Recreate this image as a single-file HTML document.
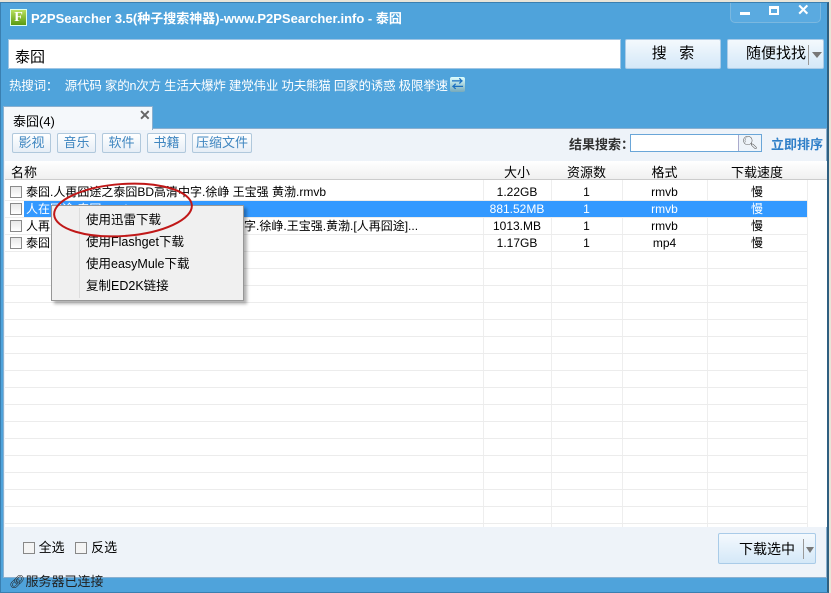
<!DOCTYPE html>
<html><head><meta charset="utf-8"><style>
*{margin:0;padding:0;box-sizing:border-box}
body{width:831px;height:593px;overflow:hidden;background:#e8e4d8;font-family:"Liberation Sans","Noto Sans CJK SC",sans-serif;font-size:12px;color:#000;position:relative}
.win{position:absolute;left:0;top:2px;width:829px;height:591px;background:#4fa3db;border:1px solid #3a7fb0;border-right:2px solid #2f5f80}
.a{position:absolute}
.title{left:30px;top:5px;color:#fff;font-weight:bold;font-size:13px}
.logo{left:9px;top:6px;width:17px;height:17px;background:linear-gradient(#b8e060,#5a9a10);border:1px solid #dfe;color:#fff;font:bold 14px "Liberation Serif",serif;text-align:center;line-height:15px}
.ctl{left:729px;top:0;width:91px;height:20px;border:1px solid #7bb8e0;border-top:none;border-radius:0 0 5px 5px;background:#5aaae0}
.inp{left:7px;top:36px;width:613px;height:30px;background:#fff;border:1px solid #9fc5e4;font-size:15px;padding:6px 6px}
.btn{background:linear-gradient(#f4f9fd,#d4e8f8);border:1px solid #a9cbe8;border-radius:2px;font-size:15px;text-align:center;line-height:28px}
.hot{left:8px;top:72px;color:#fff;font-size:12.5px;letter-spacing:-0.2px}
.panel{left:2px;top:125px;width:824px;height:450px;background:#eef3f9;border:1px solid #8ab0d0}
.tab{left:2px;top:103px;width:150px;height:24px;background:#f5f8fb;border:1px solid #8ab0d0;border-bottom:none;font-size:13px;padding:4px 9px}
.tb{top:4px;height:20px;border:1px solid #b0c8dc;border-radius:2px;background:linear-gradient(#fff,#e6eef6);color:#3f86c0;font-size:13px;line-height:18px;text-align:center}
.list{left:4px;top:158px;width:822px;height:366px;background:#fff}
.hdr{left:0;top:0;width:822px;height:19px;background:linear-gradient(#fff,#f0f0f0);border-bottom:1px solid #ccc;font-size:13px}
.row{position:absolute;left:0;width:802px;height:17px;border-bottom:1px solid #ececec;font-size:12px;line-height:16px}
.c{position:absolute;top:0;text-align:center}
.cb{position:absolute;left:5px;top:2px;width:12px;height:12px;border:1px solid #8a8a8a;background:linear-gradient(#e8e8e8,#fff)}
.sel{background:#3399ff;color:#fff}
.vl{position:absolute;top:0;width:1px;height:366px;background:#eee}
.menu{left:50px;top:202px;width:193px;height:96px;background:#f0f0f0;border:1px solid #979797;box-shadow:3px 3px 3px rgba(0,0,0,.3);font-size:12.5px}
.menu div{position:absolute;left:34px}
</style></head><body>
<div class="win">
<div class="a logo">F</div>
<div class="a title">P2PSearcher 3.5(种子搜索神器)-www.P2PSearcher.info - 泰囧</div>
<div class="a ctl"><span class="a" style="left:9px;top:9px;width:10px;height:3px;background:#fff"></span><span class="a" style="left:38px;top:3px;width:10px;height:9px;border:2px solid #fff;border-top-width:3px"></span><span class="a" style="left:66px;top:-2px;color:#fff;font-weight:bold;font-size:15px">✕</span></div>
<div class="a inp">泰囧</div>
<div class="a btn" style="left:624px;top:36px;width:96px;height:30px">搜&nbsp;&nbsp;&nbsp;索</div>
<div class="a btn" style="left:726px;top:36px;width:97px;height:30px;text-align:left;padding-left:18px">随便找找<span class="a" style="left:80px;top:5px;width:1px;height:20px;background:#999"></span><span class="a" style="left:84px;top:12px;border:5px solid transparent;border-top:6px solid #777"></span></div>
<div class="a hot">热搜词：&nbsp;&nbsp;源代码 家的n次方 生活大爆炸 建党伟业 功夫熊猫 回家的诱惑 极限挙速</div>
<div class="a" style="left:449px;top:74px;width:15px;height:15px;background:linear-gradient(#dff,#7ab);border-radius:2px;color:#1a6fc0;font-size:12px;line-height:14px;text-align:center;font-weight:bold">⇄</div>
<div class="a panel">
<div class="a tb" style="left:8px;width:39px">影视</div>
<div class="a tb" style="left:53px;width:39px">音乐</div>
<div class="a tb" style="left:98px;width:39px">软件</div>
<div class="a tb" style="left:143px;width:39px">书籍</div>
<div class="a tb" style="left:188px;width:60px">压缩文件</div>
<div class="a" style="left:565px;top:5px;font-size:13px;font-weight:bold;color:#333">结果搜索：</div>
<div class="a" style="left:626px;top:5px;width:132px;height:18px;background:#fff;border:1px solid #6aa6d8"><span class="a" style="left:107px;top:0;width:23px;height:16px;border-left:1px solid #aac;background:#eef4fa;color:#555;font-size:13px;text-align:center;line-height:16px">🔍︎</span></div>
<div class="a" style="left:767px;top:5px;font-size:13px;font-weight:bold;color:#2f7fc8">立即排序</div>
</div>
<div class="a tab">泰囧(4)<span class="a" style="left:135px;top:0px;color:#666;font-size:14px;font-weight:bold">✕</span></div>
<div class="a list">
<div class="vl" style="left:478px"></div><div class="vl" style="left:546px"></div><div class="vl" style="left:617px"></div><div class="vl" style="left:702px"></div><div class="vl" style="left:802px"></div>
<div class="a hdr"><span class="a" style="left:6px;top:1px">名称</span><span class="c" style="left:478px;width:68px;top:1px">大小</span><span class="c" style="left:546px;width:71px;top:1px">资源数</span><span class="c" style="left:617px;width:85px;top:1px">格式</span><span class="c" style="left:702px;width:100px;top:1px">下载速度</span></div>
<div class="row" style="top:23px"><span class="cb"></span><span class="a" style="left:21px">泰囧.人再囧途之泰囧BD高清中字.徐峥 王宝强 黄渤.rmvb</span><span class="c" style="left:478px;width:68px">1.22GB</span><span class="c" style="left:546px;width:71px">1</span><span class="c" style="left:617px;width:85px">rmvb</span><span class="c" style="left:702px;width:100px">慢</span></div>
<div class="row" style="top:40px"><span class="cb"></span><span class="a sel" style="left:19px;width:783px;height:16px"></span><span class="a" style="left:21px;color:#fff">人在囧途.泰囧.rmvb</span><span class="c" style="left:478px;width:68px;color:#fff">881.52MB</span><span class="c" style="left:546px;width:71px;color:#fff">1</span><span class="c" style="left:617px;width:85px;color:#fff">rmvb</span><span class="c" style="left:702px;width:100px;color:#fff">慢</span></div>
<div class="row" style="top:57px"><span class="cb"></span><span class="a" style="left:21px">人再囧途之泰囧.2012.BD高清国语中英双字.徐峥.王宝强.黄渤.[人再囧途]...</span><span class="c" style="left:478px;width:68px">1013.MB</span><span class="c" style="left:546px;width:71px">1</span><span class="c" style="left:617px;width:85px">rmvb</span><span class="c" style="left:702px;width:100px">慢</span></div>
<div class="row" style="top:74px"><span class="cb"></span><span class="a" style="left:21px">泰囧.mp4</span><span class="c" style="left:478px;width:68px">1.17GB</span><span class="c" style="left:546px;width:71px">1</span><span class="c" style="left:617px;width:85px">mp4</span><span class="c" style="left:702px;width:100px">慢</span></div>
<div class="row" style="top:91px"></div><div class="row" style="top:108px"></div><div class="row" style="top:125px"></div><div class="row" style="top:142px"></div><div class="row" style="top:159px"></div><div class="row" style="top:176px"></div><div class="row" style="top:193px"></div><div class="row" style="top:210px"></div><div class="row" style="top:227px"></div><div class="row" style="top:244px"></div><div class="row" style="top:261px"></div><div class="row" style="top:278px"></div><div class="row" style="top:295px"></div><div class="row" style="top:312px"></div><div class="row" style="top:329px"></div><div class="row" style="top:346px"></div>
</div>
<div class="a menu"><span class="a" style="left:27px;top:2px;width:1px;height:90px;background:#ddd"></span>
<div style="top:3px">使用迅雷下载</div><div style="top:25px">使用Flashget下载</div><div style="top:47px">使用easyMule下载</div><div style="top:69px">复制ED2K链接</div></div>
<svg class="a" style="left:50px;top:176px" width="145" height="62"><ellipse cx="72" cy="31" rx="69" ry="26" fill="none" stroke="#c01818" stroke-width="2" transform="rotate(-4 72 31)"/></svg>
<div class="a" style="left:22px;top:534px;font-size:13px"><span style="display:inline-block;width:12px;height:12px;border:1px solid #888;background:#f4f4f4;vertical-align:-2px"></span> 全选&nbsp;&nbsp;&nbsp;<span style="display:inline-block;width:12px;height:12px;border:1px solid #888;background:#f4f4f4;vertical-align:-2px"></span> 反选</div>
<div class="a btn" style="left:717px;top:530px;width:98px;height:31px;text-align:left;padding-left:20px;font-size:14px;line-height:30px">下载选中<span class="a" style="left:84px;top:5px;width:1px;height:20px;background:#999"></span><span class="a" style="left:87px;top:13px;border:4px solid transparent;border-top:6px solid #777"></span></div>
<div class="a" style="left:8px;top:568px;color:#222;font-size:13px">&#x1F517;&#xFE0E;服务器已连接</div>
</div>
</body></html>
